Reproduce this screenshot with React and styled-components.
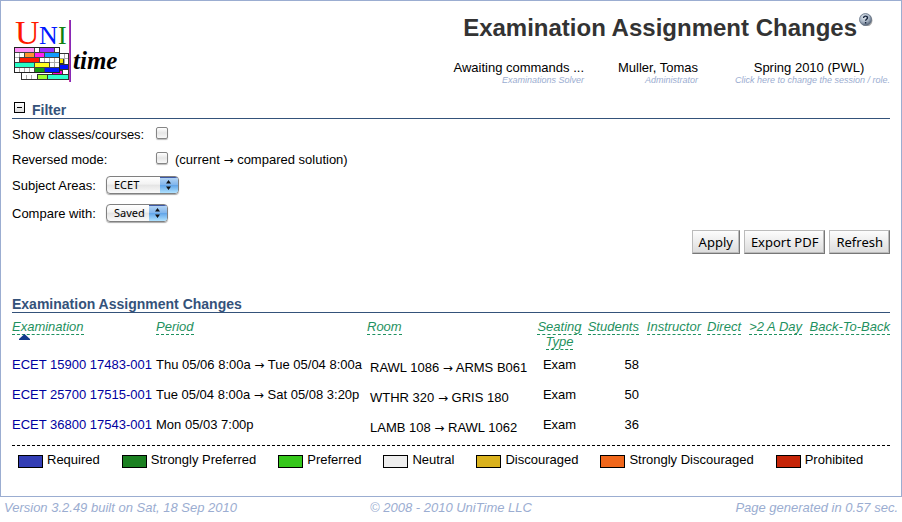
import React from "react";
import styled, { createGlobalStyle } from "styled-components";

const NAVY = "#34527a";
const MIST = "#9badd1";
const GREEN = "#1f9160";

const GlobalStyle = createGlobalStyle`
  * { box-sizing: border-box; }
  body {
    margin: 0;
    background: #fff;
    color: #000;
    font: 13px/15px "Liberation Sans", Arial, Helvetica, sans-serif;
  }
`;

const Frame = styled.main`
  border: 1px solid ${MIST};
  padding: 9px 11px 28px;
`;

const Header = styled.header`
  display: flex;
  justify-content: space-between;
  align-items: flex-start;
`;

const Logo = styled.svg`
  display: block;
  margin-top: 2px;
  flex: none;
`;

const HeaderInfo = styled.div`
  display: flex;
  flex-direction: column;
  align-items: flex-end;
  gap: 16px;
`;

const TitleRow = styled.div`
  display: flex;
  align-items: flex-start;
  gap: 1px;
  padding-right: 16px;
`;

const Title = styled.h1`
  margin: 0;
  padding-top: 2px;
  font-size: 24px;
  line-height: 32px;
  font-weight: bold;
  color: #333;
`;

const HelpLink = styled.a`
  display: block;
  height: 16px;
`;

const StatusRow = styled.div`
  display: flex;
  gap: 30px;
`;

const Status = styled.div`
  min-width: ${(p) => p.$width}px;
  text-align: ${(p) => p.$align};
`;

const StatusNote = styled.div`
  font-size: 9px;
  line-height: 11px;
  font-style: italic;
  color: ${MIST};
  text-align: right;
`;

const NoteLink = styled.a`
  color: inherit;
  text-decoration: none;
`;

const SectionBar = styled.div`
  display: flex;
  align-items: flex-end;
  gap: 7px;
  margin-top: ${(p) => p.$space}px;
  border-bottom: 1px solid ${NAVY};
`;

const SectionTitle = styled.h2`
  margin: 0;
  font-size: 14px;
  line-height: 16px;
  color: ${NAVY};
`;

const Toggle = styled.button`
  width: 11px;
  height: 11px;
  padding: 0;
  margin: 0 0 5px 2px;
  border: 1px solid #000;
  background: linear-gradient(#fff, #ddd);
  display: grid;
  place-items: center;
  &::before {
    content: "";
    width: 5px;
    height: 1px;
    background: #000;
  }
`;

const Filters = styled.form`
  display: flex;
  flex-direction: column;
`;

const FilterRow = styled.div`
  display: flex;
  align-items: center;
  height: ${(p) => p.$height}px;
`;

const FilterLabel = styled.label`
  width: ${(p) => p.$width}px;
  flex: none;
`;

const Check = styled.input`
  appearance: none;
  width: 12px;
  height: 12px;
  margin: 0 7px 2px 0;
  border: 1px solid #858585;
  border-radius: 2px;
  background: linear-gradient(#fff, #e6e6e6 50%, #f8f8f8);
  box-shadow: 0 1px 1px #bbb;
`;

const SelectBox = styled.span`
  display: grid;
  width: ${(p) => p.$width}px;
  height: 18px;
  border: 1px solid #808080;
  border-radius: 4px;
  overflow: hidden;
  background: linear-gradient(#fff, #f3f3f3 45%, #e4e4e4 50%, #fafafa);
  box-shadow: 0 1px 1px #aaa;
  > * { grid-area: 1 / 1; }
`;

const Select = styled.select`
  appearance: none;
  width: 100%;
  padding: 0 18px 0 7px;
  border: 0;
  background: transparent;
  font: 11px/16px "Noto Sans", "Open Sans", sans-serif;
  color: #000;
`;

const Stepper = styled.svg`
  justify-self: end;
  pointer-events: none;
`;

const Actions = styled.div`
  display: flex;
  justify-content: flex-end;
  gap: 4px;
  margin-top: 5px;
`;

const ActionButton = styled.button`
  height: 24px;
  padding: 0 6px;
  border: 1px solid;
  border-color: #bbb #777 #777 #bbb;
  box-shadow: inset -1px -1px 0 #bbb;
  background: linear-gradient(#fdfdfd, #dcdcdc);
  font: 13px/20px "Noto Sans", "Open Sans", sans-serif;
  color: #000;
`;

const Arrow = styled.span`
  font: 12px/1 "DejaVu Sans", sans-serif;
`;

const Table = styled.table`
  width: 100%;
  table-layout: fixed;
  border-collapse: collapse;
`;

const Col = styled.col`
  width: ${(p) => (p.$width ? `${p.$width}px` : "auto")};
`;

const HeadCell = styled.th`
  padding: 6px 0 5px;
  vertical-align: top;
  text-align: ${(p) => p.$align || "left"};
  font-weight: normal;
`;

const SortButton = styled.button`
  padding: 0;
  border: 0;
  background: none;
  font: italic 13px/15px "Liberation Sans", Arial, sans-serif;
  color: ${GREEN};
  text-align: inherit;
  white-space: ${(p) => (p.$wrap ? "normal" : "nowrap")};
`;

const SortText = styled.span`
  border-bottom: 1px dashed ${GREEN};
`;

const SortMark = styled.svg`
  display: block;
  margin-left: 7px;
`;

const Cell = styled.td`
  height: 30px;
  padding: ${(p) => (p.$inset ? "6px 0 0 3px" : "3px 0 0")};
  vertical-align: top;
  text-align: ${(p) => p.$align || "left"};
  white-space: nowrap;
`;

const ExamLink = styled.a`
  color: #0000a0;
  text-decoration: none;
`;

const Legend = styled.ul`
  display: flex;
  flex-wrap: wrap;
  gap: 4px 22px;
  margin: 1px 0 0;
  padding: 6px 0 0 6px;
  border-top: 1px dashed #000;
  list-style: none;
`;

const LegendItem = styled.li`
  display: flex;
  align-items: flex-start;
  gap: 4px;
`;

const Swatch = styled.span`
  width: 25px;
  height: 13px;
  margin-top: 3px;
  border: 1px solid #000;
  background: ${(p) => p.$color};
`;

const Footer = styled.footer`
  display: grid;
  grid-template-columns: 1fr auto 1fr;
  padding: 3px 4px;
  font-style: italic;
  color: ${MIST};
  > :last-child { text-align: right; }
`;

const backBricks = [
  [7, 6, 47, 26, "#fff"],
  [45, 11, 4, 5, "#f5e800"],
  [45, 17, 9, 5, "#0010ff"],
  [38, 23, 10, 4, "#f0c"],
  [23, 27, 10, 5, "#9cff30"],
  [33, 27, 21, 5, "#30ffcc"],
];

const frontBricks = [
  [0, 0, 20, "#ff90f8"], [20, 0, 5, "#fff"], [25, 0, 15, "#9b30ff"], [40, 0, 5, "#fff"],
  [0, 5, 5, "#fff"], [5, 5, 5, "#fff"], [10, 5, 10, "#ff9430"], [20, 5, 10, "#ff20f0"], [30, 5, 15, "#109bff"],
  [0, 10, 5, "#fff"], [5, 10, 20, "#ff1800"], [25, 10, 5, "#fff"], [30, 10, 5, "#fff"], [35, 10, 5, "#fff"], [40, 10, 5, "#fff"],
  [0, 15, 20, "#28ffc8"], [20, 15, 15, "#ffff20"], [35, 15, 5, "#fff"], [40, 15, 5, "#fff"],
  [0, 20, 5, "#fff"], [5, 20, 5, "#fff"], [10, 20, 5, "#fff"], [15, 20, 5, "#fff"], [20, 20, 10, "#189b10"], [30, 20, 15, "#0018ff"],
];

function UniTimeLogo() {
  const plain = frontBricks.filter((b) => b[3] === "#fff");
  const coloured = frontBricks.filter((b) => b[3] !== "#fff");
  return (
    <Logo width="110" height="72" viewBox="0 -4 110 72" role="img" aria-label="UniTime">
      <defs>
        <linearGradient id="bar" x1="0" x2="1">
          <stop offset="0" stopColor="#e0409a" />
          <stop offset="1" stopColor="#6a20c0" />
        </linearGradient>
      </defs>
      <g fontFamily="Liberation Serif, Times New Roman, serif">
        <text x="3" y="28" fontSize="34" fill="#ff1800">U</text>
        <text x="27" y="28" fontSize="26" fill="#0018ff">N</text>
        <text x="46" y="28" fontSize="26" fill="#108010">I</text>
      </g>
      <g transform="translate(2 31)" stroke="#333" strokeWidth="1" shapeRendering="crispEdges">
        {backBricks.map(([x, y, w, h, c]) => (
          <rect key={`${x}-${y}`} x={x + 0.5} y={y + 0.5} width={w} height={h} fill={c} />
        ))}
        <path d="M50.5 7v10M46 11.5h8M12.5 28v4M17.5 28v4" stroke="#aaa" fill="none" />
        {[...plain, ...coloured].map(([x, y, w, c]) => (
          <rect key={`${x}-${y}`} x={x + 0.5} y={y + 0.5} width={w} height="5" fill={c} stroke={c === "#fff" ? "#aaa" : "#444"} />
        ))}
        <rect x="0.5" y="0.5" width="45" height="25" fill="none" stroke="#222" />
      </g>
      <rect x="57" y="4" width="2" height="62" fill="url(#bar)" />
      <text x="61" y="53" fontSize="25" fontStyle="italic" fontWeight="bold" fontFamily="Liberation Serif, serif">time</text>
    </Logo>
  );
}

function HelpIcon() {
  return (
    <svg width="16" height="16" viewBox="0 0 16 16" aria-hidden="true">
      <defs>
        <radialGradient id="ball" cx="0.4" cy="0.3" r="0.7">
          <stop offset="0" stopColor="#e4ebf2" />
          <stop offset="0.6" stopColor="#a5b2c2" />
          <stop offset="1" stopColor="#536175" />
        </radialGradient>
      </defs>
      <circle cx="8.5" cy="10.5" r="6" fill="#aaa" />
      <circle cx="7.5" cy="9.5" r="6" fill="url(#ball)" stroke="#667487" strokeWidth="0.8" />
      <path d="M5.6 8C5.6 5.6 9.5 5.6 9.5 7.8C9.5 9.2 7.6 9.2 7.6 10.8M7.6 12v1.4" fill="none" stroke="#17243c" strokeWidth="1.4" />
    </svg>
  );
}

function DropDown({ id, width, value }) {
  return (
    <SelectBox $width={width}>
      <Select id={id} defaultValue={value}>
        <option>{value}</option>
      </Select>
      <Stepper width="18" height="16" viewBox="0 0 18 16" aria-hidden="true">
        <defs>
          <linearGradient id={`${id}-blue`} x2="0" y2="1">
            <stop offset="0" stopColor="#b9d8f6" />
            <stop offset="0.48" stopColor="#82b6ec" />
            <stop offset="0.52" stopColor="#62a5e8" />
            <stop offset="1" stopColor="#b0e2ff" />
          </linearGradient>
        </defs>
        <rect width="18" height="16" fill={`url(#${id}-blue)`} />
        <path d="M0 0.5h18" stroke="#3e58a4" />
        <path d="M6 6.5L8.5 3L11 6.5zM6 9.5L8.5 13L11 9.5z" fill="#111" />
      </Stepper>
    </SelectBox>
  );
}

function Change({ from, to }) {
  return to ? <>{from} <Arrow>→</Arrow> {to}</> : from;
}

const columns = [
  { label: "Examination", width: 144, sorted: true },
  { label: "Period", width: 211 },
  { label: "Room" },
  { label: "Seating Type", width: 45, align: "center", wrap: true },
  { label: "Students", width: 57, align: "right" },
  { label: "Instructor", width: 62, align: "right" },
  { label: "Direct", width: 40, align: "right" },
  { label: ">2 A Day", width: 61, align: "right" },
  { label: "Back-To-Back", width: 88, align: "right" },
];

const exams = [
  { name: "ECET 15900 17483-001", period: ["Thu 05/06 8:00a", "Tue 05/04 8:00a"], room: ["RAWL 1086", "ARMS B061"], students: 58 },
  { name: "ECET 25700 17515-001", period: ["Tue 05/04 8:00a", "Sat 05/08 3:20p"], room: ["WTHR 320", "GRIS 180"], students: 50 },
  { name: "ECET 36800 17543-001", period: ["Mon 05/03 7:00p"], room: ["LAMB 108", "RAWL 1062"], students: 36 },
];

const preferences = [
  ["Required", "#333eb5"],
  ["Strongly Preferred", "#1b8021"],
  ["Preferred", "#35c71b"],
  ["Neutral", "#eee"],
  ["Discouraged", "#dab21d"],
  ["Strongly Discouraged", "#f0671b"],
  ["Prohibited", "#c62508"],
];

export default function App() {
  return (
    <>
      <GlobalStyle />
      <Frame>
        <Header>
          <UniTimeLogo />
          <HeaderInfo>
            <TitleRow>
              <Title>Examination Assignment Changes</Title>
              <HelpLink href="#help" aria-label="Help"><HelpIcon /></HelpLink>
            </TitleRow>
            <StatusRow>
              <Status $align="right">
                Awaiting commands ...
                <StatusNote>Examinations Solver</StatusNote>
              </Status>
              <Status $align="right" $width={84}>
                Muller, Tomas
                <StatusNote>Administrator</StatusNote>
              </Status>
              <Status $align="center" $width={162}>
                Spring 2010 (PWL)
                <StatusNote><NoteLink href="#session">Click here to change the session / role.</NoteLink></StatusNote>
              </Status>
            </StatusRow>
          </HeaderInfo>
        </Header>

        <SectionBar $space={16}>
          <Toggle type="button" aria-label="Collapse filter" />
          <SectionTitle>Filter</SectionTitle>
        </SectionBar>

        <Filters onSubmit={(e) => e.preventDefault()}>
          <FilterRow $height={30}>
            <FilterLabel $width={144} htmlFor="classes">Show classes/courses:</FilterLabel>
            <Check type="checkbox" id="classes" />
          </FilterRow>
          <FilterRow $height={20}>
            <FilterLabel $width={144} htmlFor="reversed">Reversed mode:</FilterLabel>
            <Check type="checkbox" id="reversed" />
            <span>(<Change from="current" to="compared solution" />)</span>
          </FilterRow>
          <FilterRow $height={32}>
            <FilterLabel $width={94} htmlFor="subject">Subject Areas:</FilterLabel>
            <DropDown id="subject" width={73} value="ECET" />
          </FilterRow>
          <FilterRow $height={24}>
            <FilterLabel $width={94} htmlFor="compare">Compare with:</FilterLabel>
            <DropDown id="compare" width={62} value="Saved" />
          </FilterRow>
          <Actions>
            <ActionButton type="submit">Apply</ActionButton>
            <ActionButton type="button">Export PDF</ActionButton>
            <ActionButton type="button">Refresh</ActionButton>
          </Actions>
        </Filters>

        <SectionBar $space={42}>
          <SectionTitle>Examination Assignment Changes</SectionTitle>
        </SectionBar>

        <Table>
          <colgroup>
            {columns.map((c) => <Col key={c.label} $width={c.width} />)}
          </colgroup>
          <thead>
            <tr>
              {columns.map((c) => (
                <HeadCell key={c.label} $align={c.align} scope="col">
                  <SortButton type="button" $wrap={c.wrap}><SortText>{c.label}</SortText></SortButton>
                  {c.sorted && (
                    <SortMark width="11" height="6" viewBox="0 0 11 6" aria-hidden="true">
                      <path d="M5.5 0L11 5V6H0V5z" fill="#123a8c" />
                    </SortMark>
                  )}
                </HeadCell>
              ))}
            </tr>
          </thead>
          <tbody>
            {exams.map((e) => (
              <tr key={e.name}>
                <Cell><ExamLink href="#exam">{e.name}</ExamLink></Cell>
                <Cell><Change from={e.period[0]} to={e.period[1]} /></Cell>
                <Cell $inset><Change from={e.room[0]} to={e.room[1]} /></Cell>
                <Cell $align="center">Exam</Cell>
                <Cell $align="right">{e.students}</Cell>
                <Cell /><Cell /><Cell /><Cell />
              </tr>
            ))}
          </tbody>
        </Table>

        <Legend>
          {preferences.map(([name, color]) => (
            <LegendItem key={name}><Swatch $color={color} />{name}</LegendItem>
          ))}
        </Legend>
      </Frame>
      <Footer>
        <span>Version 3.2.49 built on Sat, 18 Sep 2010</span>
        <span>© 2008 - 2010 UniTime LLC</span>
        <span>Page generated in 0.57 sec.</span>
      </Footer>
    </>
  );
}
